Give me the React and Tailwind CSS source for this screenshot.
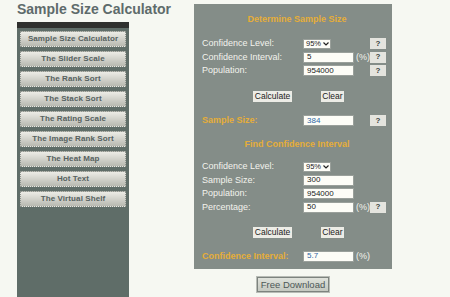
const menu = [
  "Sample Size Calculator",
  "The Slider Scale",
  "The Rank Sort",
  "The Stack Sort",
  "The Rating Scale",
  "The Image Rank Sort",
  "The Heat Map",
  "Hot Text",
  "The Virtual Shelf",
];

function Help() {
  return (
    <span className="ml-auto mr-[6px] flex h-[11px] w-[16px] items-center justify-center bg-[#e4e4de] text-[8px] font-bold leading-none text-[#3a3f3e]">
      ?
    </span>
  );
}

function Field({ value, blue }) {
  return (
    <span
      className={
        "flex h-[11px] w-[51px] items-center border border-[#9aa09b] bg-[#fdfdf7] pl-[3px] text-[8px] leading-none " +
        (blue ? "text-[#2f67a6]" : "text-[#222]")
      }
    >
      {value}
    </span>
  );
}

function Select() {
  return (
    <span className="flex h-[10px] w-[28px] items-center gap-[2px] border border-[#9aa09b] bg-[#fdfdf7] pl-[2px] text-[7.5px] leading-none text-[#222]">
      95%
      <svg width="6" height="4" viewBox="0 0 6 4">
        <path d="M0.5 0.5 L3 3 L5.5 0.5" fill="none" stroke="#222" strokeWidth="1.2" />
      </svg>
    </span>
  );
}

function Row({ label, children, pct, help }) {
  return (
    <div className="flex h-[13.5px] items-center">
      <span className="w-[101px] text-[9px] leading-none text-[#f3f3ed]">{label}</span>
      {children}
      {pct && <span className="ml-[2px] text-[9px] leading-none text-[#f3f3ed]">(%)</span>}
      {help && <Help />}
    </div>
  );
}

function Buttons() {
  return (
    <div className="flex h-[11px] justify-center gap-[29px] pl-[3px]">
      <span className="flex h-[11px] w-[39px] items-center justify-center bg-[#ececE6] text-[8.5px] leading-none text-[#222]">
        Calculate
      </span>
      <span className="flex h-[11px] w-[23px] items-center justify-center bg-[#ececE6] text-[8.5px] leading-none text-[#222]">
        Clear
      </span>
    </div>
  );
}

function Heading({ children }) {
  return (
    <div className="flex h-[14px] items-center justify-center text-[9px] font-bold text-[#e6ad38]">
      {children}
    </div>
  );
}

export default function App() {
  return (
    <div className="flex h-[297px] overflow-hidden bg-[#f6f8f2] font-['Liberation_Sans',Arial,sans-serif]">
      <div className="ml-[17px] flex w-[112px] flex-col">
        <h1 className="h-[22px] whitespace-nowrap text-[14px] font-bold leading-[18px] text-[#5e6b6b]">
          Sample Size Calculator
        </h1>
        <div className="flex flex-1 flex-col bg-[#5f6d68]">
          <div className="h-[6px] bg-[#2f302e]" />
          <div className="flex flex-col gap-[4px] px-[3px] pt-[3px]">
            {menu.map((m) => (
              <div
                key={m}
                className="flex h-[16px] items-center justify-center border border-dotted border-[#8d938d] bg-gradient-to-b from-[#ececE6] to-[#b8b9b1] text-[8px] font-bold tracking-[0.1px] text-[#56615f]"
              >
                {m}
              </div>
            ))}
          </div>
        </div>
      </div>

      <div className="ml-[65px] flex w-[198px] flex-col items-center pt-[4px]">
        <div className="w-full bg-[#848d88] pb-[6.5px] pl-[8px] pt-[9px]">
          <Heading>Determine Sample Size</Heading>
          <div className="mt-[10px]">
            <Row label="Confidence Level:" help>
              <Select />
            </Row>
            <Row label="Confidence Interval:" pct help>
              <Field value="5" />
            </Row>
            <Row label="Population:" help>
              <Field value="954000" />
            </Row>
          </div>
          <div className="mt-[13.5px]">
            <Buttons />
          </div>
          <div className="mt-[12px] flex h-[13px] items-center">
            <span className="w-[101px] text-[9px] font-bold leading-none text-[#e6ad38]">Sample Size:</span>
            <Field value="384" blue />
            <Help />
          </div>

          <div className="mt-[11px]">
            <Heading>Find Confidence Interval</Heading>
          </div>
          <div className="mt-[8px]">
            <Row label="Confidence Level:">
              <Select />
            </Row>
            <Row label="Sample Size:">
              <Field value="300" />
            </Row>
            <Row label="Population:">
              <Field value="954000" />
            </Row>
            <Row label="Percentage:" pct help>
              <Field value="50" />
            </Row>
          </div>
          <div className="mt-[13px]">
            <Buttons />
          </div>
          <div className="mt-[11.5px] flex h-[13px] items-center">
            <span className="w-[101px] text-[9px] font-bold leading-none text-[#e6ad38]">Confidence Interval:</span>
            <Field value="5.7" blue />
            <span className="ml-[2px] text-[9px] leading-none text-[#f3f3ed]">(%)</span>
          </div>
        </div>

        <div className="mt-[8px] flex h-[15px] w-[72px] items-center justify-center border border-[#7d837e] bg-gradient-to-b from-[#dfe2db] to-[#c4c8c0] text-[9.5px] leading-none text-[#4d5857] shadow-[0_0_0_1px_#b8bcb6]">
          Free Download
        </div>
      </div>
    </div>
  );
}
